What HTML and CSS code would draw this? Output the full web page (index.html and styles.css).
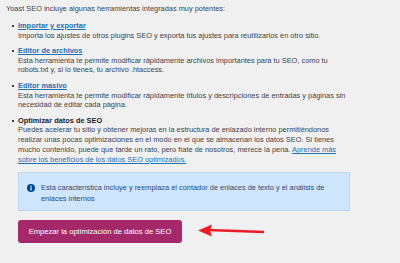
FILE: index.html
```html
<!DOCTYPE html>
<html lang="es">

<head>
    <meta charset="UTF-8">
    <meta name="viewport" content="width=device-width, initial-scale=1.0">
    <title>Herramientas de Yoast SEO</title>
    <link rel="stylesheet" href="styles.css">
</head>

<body>
    <div class="wrap">
        <p class="intro">Yoast SEO incluye algunas herramientas integradas muy potentes:</p>
        <ul class="tools">
            <li>
                <a href="javascript:;" class="tool-link">Importar y exportar</a>
                <p>Importa los ajustes de otros plugins SEO y exporta tus ajustes para reutilizarlos en otro sitio.</p>
            </li>
            <li>
                <a href="javascript:;" class="tool-link">Editor de archivos</a>
                <p>Esta herramienta te permite modificar rápidamente archivos importantes para tu SEO, como tu robots.txt y, si lo tienes, tu archivo .htaccess.</p>
            </li>
            <li>
                <a href="javascript:;" class="tool-link">Editor masivo</a>
                <p>Esta herramienta te permite modificar rápidamente títulos y descripciones de entradas y páginas sin necesidad de editar cada página.</p>
            </li>
            <li>
                <strong class="tool-title">Optimizar datos de SEO</strong>
                <p>Puedes acelerar tu sitio y obtener mejoras en la estructura de enlazado interno permitiéndonos realizar unas pocas optimizaciones en el modo en el que se almacenan los datos SEO. Si tienes mucho contenido, puede que tarde un rato, pero fíate de nosotros, merece la pena. <a href="javascript:;">Aprende más sobre los beneficios de los datos SEO optimizados.</a></p>
                <div class="alert">
                    <svg class="alert-icon" width="8" height="8" viewBox="0 0 8 8">
                        <circle cx="4" cy="4" r="4" fill="#004a8f" />
                        <rect x="3.4" y="3.4" width="1.2" height="2.9" fill="#fff" />
                        <circle cx="4" cy="2.2" r="0.7" fill="#fff" />
                    </svg>
                    <span>Esta característica incluye y reemplaza el contador de enlaces de texto y el análisis de enlaces internos</span>
                </div>
                <div class="actions">
                    <button class="btn-start">Empezar la optimización de datos de SEO</button>
                    <svg class="arrow" width="68" height="14" viewBox="0 0 68 14">
                        <line x1="10" y1="6" x2="66" y2="8" stroke="#ec1c24" stroke-width="2.4" />
                        <polygon points="0,6.4 14,0.5 12,6.5 14,12.5" fill="#ec1c24" />
                    </svg>
                </div>
            </li>
        </ul>
    </div>
</body>

</html>
```

FILE: styles.css
```css
html * {
    padding: 0;
    margin: 0;
}

body {
    background: #f0f0f1;
    color: #3c434a;
    font-family: "Liberation Sans", Arial, sans-serif;
    font-size: 7.4px;
    line-height: 9.8px;
}

a {
    color: #2271b1;
    text-decoration: underline;
}

.wrap {
    width: 344px;
    padding: 4px 0 0 6px;
}

.intro {
    margin-bottom: 7px;
}

.tools {
    list-style: none;
    padding-left: 12px;
}

.tools li {
    position: relative;
    margin-bottom: 5.5px;
}

.tools li::before {
    content: "";
    position: absolute;
    left: -6px;
    top: 4px;
    width: 2px;
    height: 2px;
    background: #3c434a;
}

.tool-link {
    font-weight: bold;
}

.tool-title {
    color: #1d2327;
}

.alert {
    display: flex;
    align-items: flex-start;
    gap: 6px;
    margin-top: 7px;
    padding: 9px 8px 5px 8px;
    background: #cfe5fb;
    border: 1px solid #b8d6f4;
    color: #2b4a73;
    line-height: 11.5px;
    width: 332px;
    box-sizing: border-box;
}

.alert-icon {
    flex: none;
    margin-top: 2px;
}

.actions {
    display: flex;
    align-items: center;
    margin-top: 9px;
}

.btn-start {
    width: 164px;
    height: 23px;
    border: 0;
    border-radius: 3px;
    background: #a4286a;
    color: #fff;
    font-family: "Liberation Sans", Arial, sans-serif;
    font-size: 7.6px;
}

.arrow {
    margin-left: 16px;
}
```
